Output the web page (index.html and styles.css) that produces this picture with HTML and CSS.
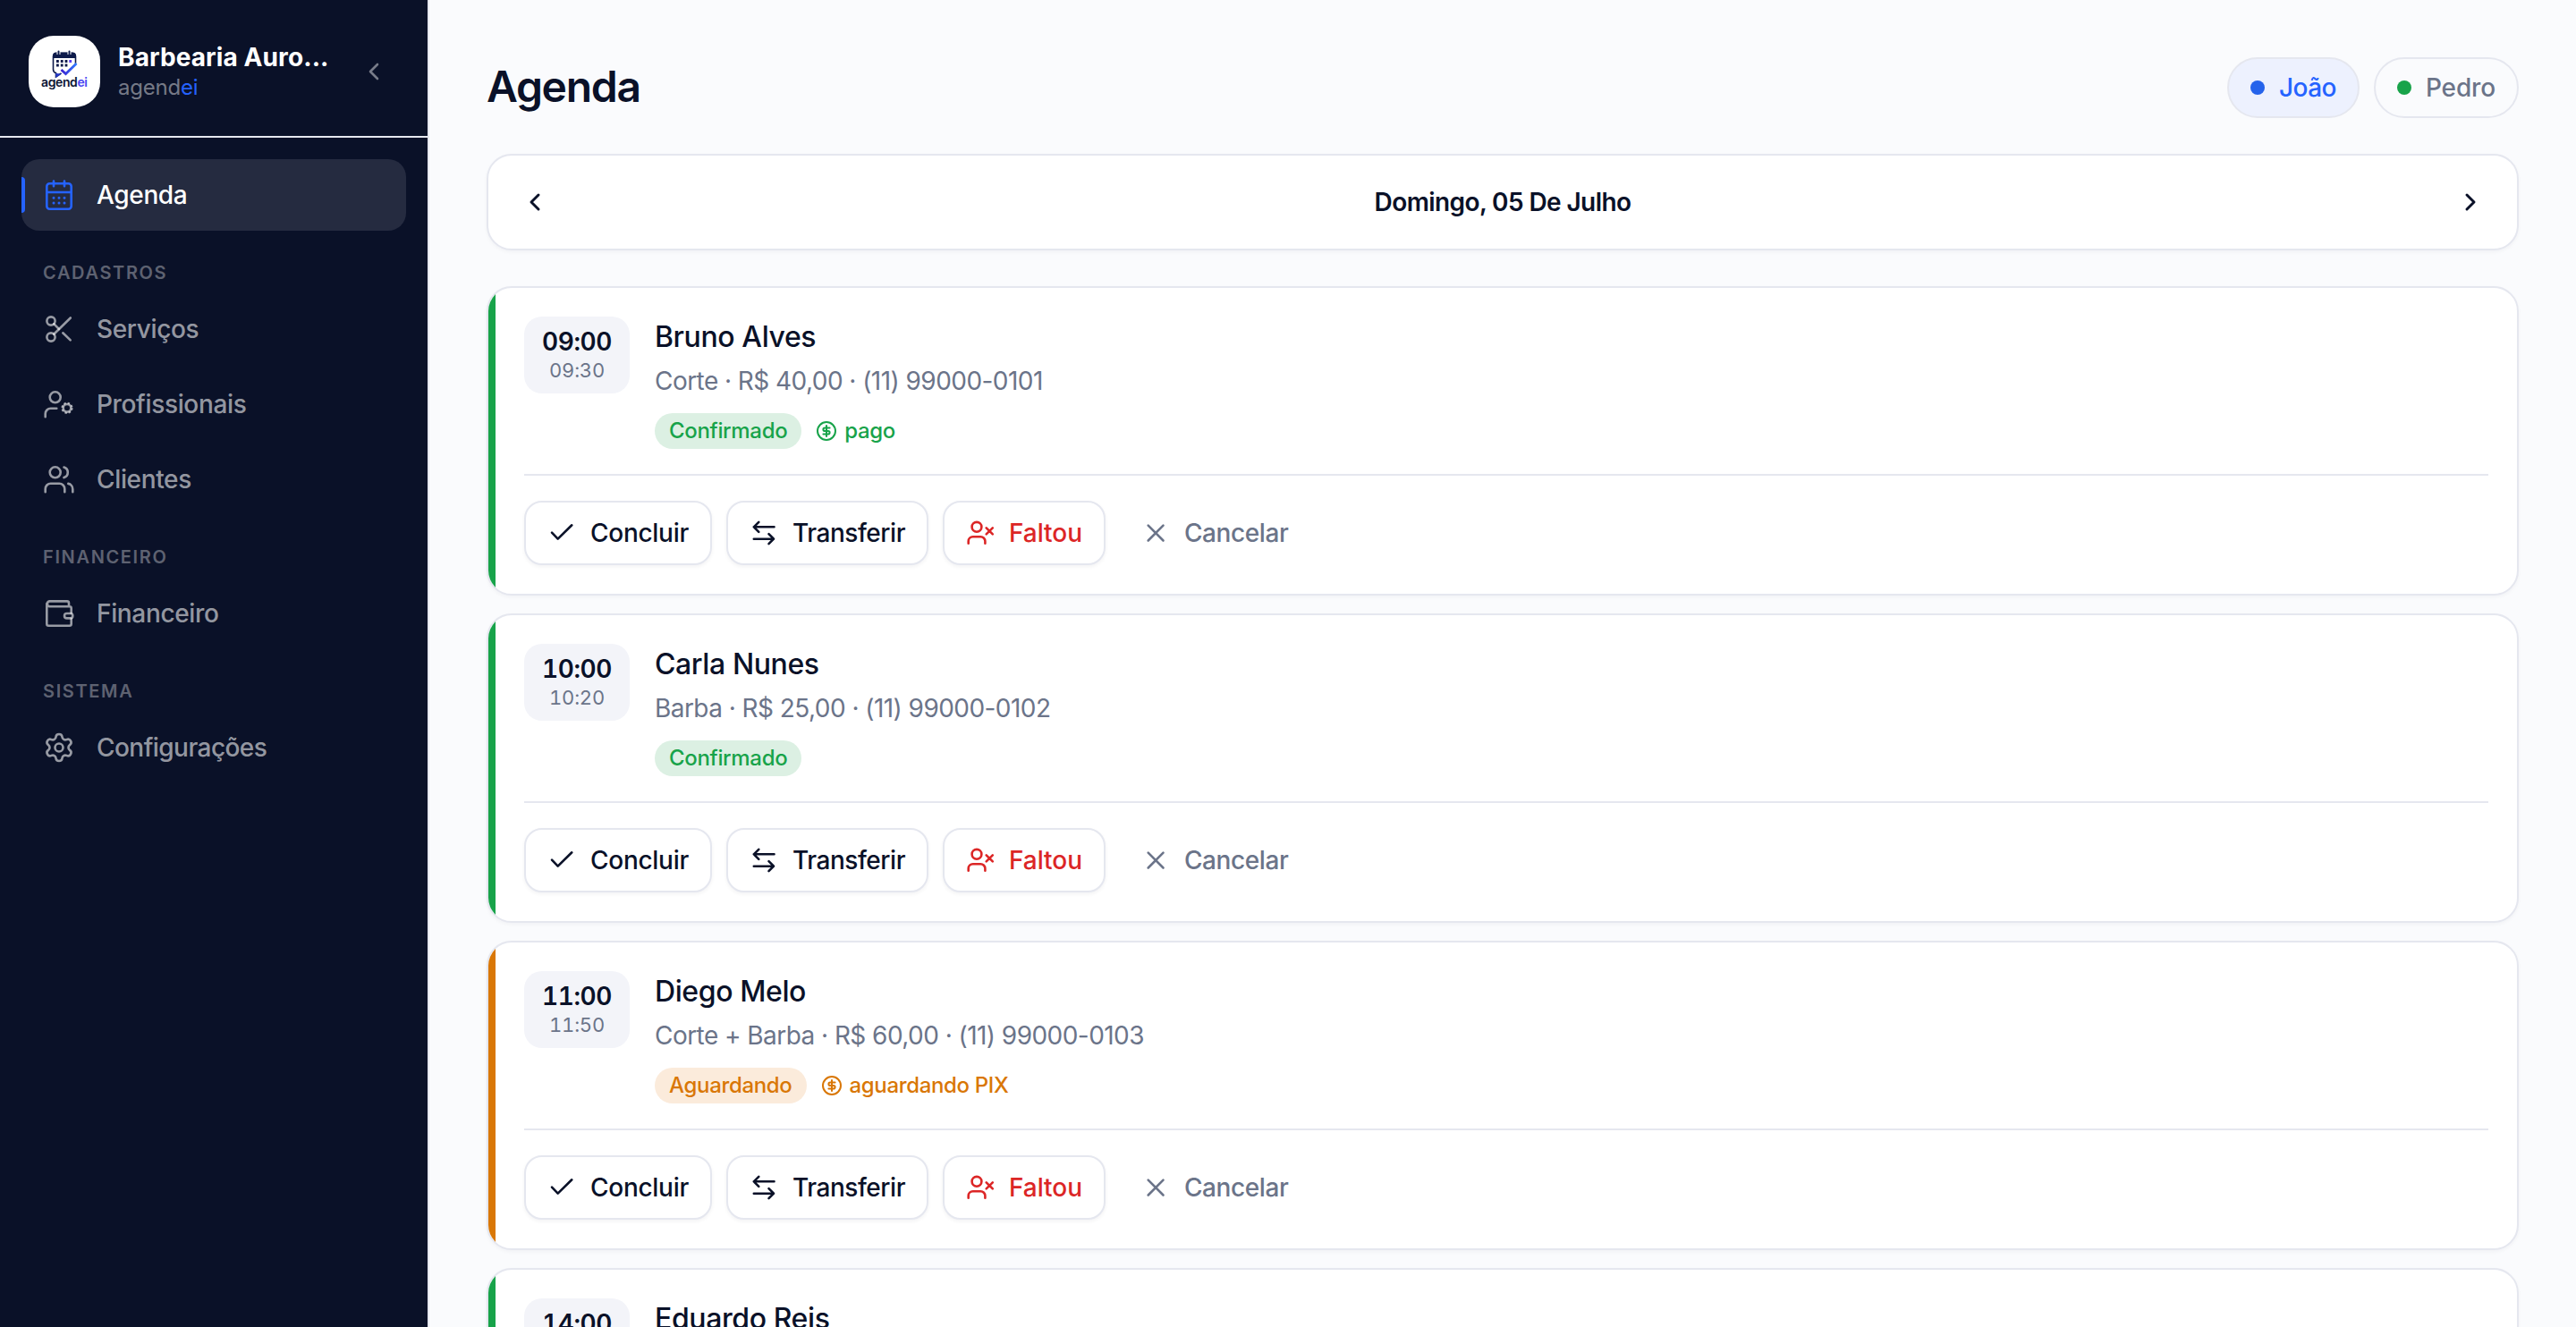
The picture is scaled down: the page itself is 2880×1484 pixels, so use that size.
FILE: index.html
```html
<!DOCTYPE html>
<html lang="pt-BR">
<head>
    <meta charset="UTF-8">
    <meta name="viewport" content="width=device-width, initial-scale=1.0">
    <title>Agenda</title>
    <link rel="stylesheet" href="styles.css">
</head>
<body>
    <!-- Shared icons -->
    <svg class="sprite">
        <symbol id="i-check" viewBox="0 0 32 32"><path d="M5 15.7l6.7 6.9L27.3 7.3"/></symbol>
        <symbol id="i-transfer" viewBox="0 0 32 32"><path d="M10.3 3.8L4.8 9.3l5.5 5.5M4.8 9.3H27.5M21.5 17.2l5.5 5.5-5.5 5.5M27 22.7H4.8"/></symbol>
        <symbol id="i-user-x" viewBox="0 0 32 32"><circle cx="12" cy="9.3" r="5.4"/><path d="M2.7 27.7v-2.4a5 5 0 0 1 5-5h8.7a5 5 0 0 1 5 5v2.4M22.7 10.3l7.1 7.1M29.8 10.3l-7.1 7.1"/></symbol>
        <symbol id="i-x" viewBox="0 0 32 32"><path d="M7.7 7.7l16.8 16.8M24.5 7.7L7.7 24.5"/></symbol>
        <symbol id="i-coin" viewBox="0 0 24 24"><circle cx="12" cy="12" r="10"/><path d="M15.6 8.4h-5.4a1.8 1.8 0 0 0 0 3.6h3.6a1.8 1.8 0 0 1 0 3.6H8.4M12 6v12"/></symbol>
        <symbol id="i-left" viewBox="0 0 32 32"><path d="M20 8l-8 8 8 8"/></symbol>
        <symbol id="i-right" viewBox="0 0 32 32"><path d="M12 8l8 8-8 8"/></symbol>
    </svg>

    <div class="app">
        <aside class="sidebar">
            <div class="brand">
                <svg class="brand-logo" viewBox="0 0 80 80">
                    <path d="M31 19.5h18a3.5 3.5 0 0 1 3.5 3.5v8M31 19.5a3.5 3.5 0 0 0-3.5 3.5v14.5a4 4 0 0 0 3 4v4.5l6-4.2" fill="none" stroke="#0d1a4a" stroke-width="1.6"/>
                    <path d="M27 25v-2.5a4 4 0 0 1 4-4h18a4 4 0 0 1 4 4V25z" fill="#0d1a4a"/>
                    <path d="M33.5 17v4M45.5 17v4" stroke="#fff" stroke-width="4"/>
                    <path d="M33.5 17.5v3.500M45.5 17.5v3.500" stroke="#0d1a4a" stroke-width="2" stroke-linecap="round"/>
                    <path d="M31 28.5h12.500M31 33h12.500" stroke="#0d1a4a" stroke-width="2.8" stroke-dasharray="2.8 2"/>
                    <path d="M45.3 28.5h2.8" stroke="#5b3df5" stroke-width="2.8"/>
                    <path d="M30 42l7 .5-6.5 4.5z" fill="#2438c4"/>
                    <path d="M36.5 38l5 4.5L53.5 31" fill="none" stroke="url(#tick)" stroke-width="2.8"/>
                    <linearGradient id="tick"><stop offset="0" stop-color="#3b1fd0"/><stop offset="1" stop-color="#2f7bff"/></linearGradient>
                    <text class="logo-text" x="14" y="57" textLength="52">agend<tspan fill="#4a49f2">ei</tspan></text>
                </svg>
                <div class="brand-info">
                    <div class="brand-name">Barbearia Auro...</div>
                    <div class="brand-sub">agend<span>ei</span></div>
                </div>
                <svg class="icon collapse"><use href="#i-left"/></svg>
            </div>

            <nav class="nav">
                <a class="nav-item active">
                    <svg class="nav-icon" viewBox="0 0 36 36"><rect x="4.3" y="5.3" width="27.4" height="28.4" rx="3.2"/><path d="M4.3 15h27.4M12 2.5v5.8M24 2.5v5.8"/><path class="dots" d="M12 21.3h.01M18 21.3h.01M24 21.3h.01M12 27h.01M18 27h.01M24 27h.01"/></svg>
                    Agenda
                </a>

                <div class="nav-label">CADASTROS</div>
                <a class="nav-item">
                    <svg class="nav-icon" viewBox="0 0 36 36"><circle cx="9" cy="9" r="4.6"/><circle cx="9" cy="27" r="4.6"/><path d="M12.2 12.2L18 18"/><path d="M30.8 5.5L12.2 23.8"/><path d="M22.3 22.3l8.4 8.1"/></svg>
                    Serviços
                </a>
                <a class="nav-item">
                    <svg class="nav-icon" viewBox="0 0 36 36"><circle cx="13.7" cy="10.3" r="6"/><path d="M2.7 32.3v-3.6a6 6 0 0 1 6-6h6.6"/><circle cx="27" cy="22.3" r="4.3"/><circle class="teeth" cx="27" cy="22.3" r="5.6"/></svg>
                    Profissionais
                </a>
                <a class="nav-item">
                    <svg class="nav-icon" viewBox="0 0 36 36"><circle cx="13.7" cy="10.3" r="6"/><path d="M2.7 32.3v-3.6a6 6 0 0 1 6-6h9.6a6 6 0 0 1 6 6v3.6M23.5 4.6a6 6 0 0 1 0 11.5M28.3 22.9a6 6 0 0 1 5 6v3.4"/></svg>
                    Clientes
                </a>

                <div class="nav-label">FINANCEIRO</div>
                <a class="nav-item">
                    <svg class="nav-icon" viewBox="0 0 36 36"><path d="M29 10.3V6.4a2 2 0 0 0-2-2H7.3a3 3 0 0 0 0 5.9h22.4a2 2 0 0 1 2 2v5.2M31.7 23.7v6a2 2 0 0 1-2 2H6.3a2 2 0 0 1-2-2V7"/><rect x="24" y="18" width="9.3" height="5.4" rx="2.7"/></svg>
                    Financeiro
                </a>

                <div class="nav-label">SISTEMA</div>
                <a class="nav-item last">
                    <svg class="nav-icon gear" viewBox="0 0 24 24"><path d="M9.671 4.136a2.34 2.34 0 0 1 4.659 0 2.34 2.34 0 0 0 3.319 1.915 2.34 2.34 0 0 1 2.33 4.033 2.34 2.34 0 0 0 0 3.831 2.34 2.34 0 0 1-2.33 4.033 2.34 2.34 0 0 0-3.319 1.915 2.34 2.34 0 0 1-4.659 0 2.34 2.34 0 0 0-3.32-1.915 2.34 2.34 0 0 1-2.33-4.033 2.34 2.34 0 0 0 0-3.831A2.34 2.34 0 0 1 6.35 6.051a2.34 2.34 0 0 0 3.319-1.915"/><circle cx="12" cy="12" r="3"/></svg>
                    Configurações
                </a>
            </nav>
        </aside>

        <main class="main">
            <header class="page-header">
                <h1>Agenda</h1>
                <div class="pills">
                    <button class="pill selected"><span class="dot blue"></span>João</button>
                    <button class="pill"><span class="dot green"></span>Pedro</button>
                </div>
            </header>

            <div class="date-bar">
                <svg class="icon"><use href="#i-left"/></svg>
                <span class="date">Domingo, 05 De Julho</span>
                <svg class="icon"><use href="#i-right"/></svg>
            </div>

            <div class="list" id="list"></div>
        </main>
    </div>

    <script>
        const appointments = [
            { start: '09:00', end: '09:30', name: 'Bruno Alves', details: 'Corte · R$ 40,00 · (11) 99000-0101', status: 'Confirmado', type: 'confirmed', payment: 'pago' },
            { start: '10:00', end: '10:20', name: 'Carla Nunes', details: 'Barba · R$ 25,00 · (11) 99000-0102', status: 'Confirmado', type: 'confirmed' },
            { start: '11:00', end: '11:50', name: 'Diego Melo', details: 'Corte + Barba · R$ 60,00 · (11) 99000-0103', status: 'Aguardando', type: 'waiting', payment: 'aguardando PIX' },
            { start: '14:00', end: '14:30', name: 'Eduardo Reis', details: 'Corte · R$ 40,00 · (11) 99000-0104', status: 'Confirmado', type: 'confirmed' }
        ];

        const icon = (name, cls = 'icon') => `<svg class="${cls}"><use href="#i-${name}"/></svg>`;

        document.getElementById('list').innerHTML = appointments.map(a => `
            <article class="card ${a.type}">
                <div class="card-top">
                    <div class="time">
                        <div class="time-start">${a.start}</div>
                        <div class="time-end">${a.end}</div>
                    </div>
                    <div class="info">
                        <div class="name">${a.name}</div>
                        <div class="details">${a.details}</div>
                        <div class="tags">
                            <span class="badge">${a.status}</span>
                            ${a.payment ? `<span class="payment">${icon('coin', 'coin')}${a.payment}</span>` : ''}
                        </div>
                    </div>
                </div>
                <div class="actions">
                    <button class="btn btn-done">${icon('check')}Concluir</button>
                    <button class="btn btn-transfer">${icon('transfer')}Transferir</button>
                    <button class="btn btn-missed">${icon('user-x')}Faltou</button>
                    <button class="btn btn-cancel">${icon('x')}Cancelar</button>
                </div>
            </article>
        `).join('');
    </script>
</body>
</html>
```

FILE: styles.css
```css
* {
    box-sizing: border-box;
}
body {
    margin: 0;
    font-family: Inter, "Liberation Sans", sans-serif;
    font-size: 28px;
    color: #0a1128;
    background: #fafbfd;
}
button {
    font: inherit;
    cursor: pointer;
}
svg {
    display: block;
    flex-shrink: 0;
}
.sprite {
    display: none;
}
.icon {
    width: 32px;
    height: 32px;
}
.icon, .coin, .nav-icon {
    fill: none;
    stroke: currentColor;
    stroke-width: 2.6;
    stroke-linecap: round;
    stroke-linejoin: round;
}
.app {
    display: flex;
    height: 100vh;
    overflow: hidden;
}

/* Sidebar */
.sidebar {
    width: 480px;
    flex-shrink: 0;
    background: #0a1128;
    border-right: 2px solid #e5e7ef;
}
.brand {
    display: flex;
    align-items: center;
    height: 154px;
    padding: 8px 44px 0 32px;
    border-bottom: 2px solid #e5e7ef;
}
.brand-logo {
    width: 80px;
    height: 80px;
    border-radius: 28px;
    background: #fff;
}
.logo-text {
    font-size: 14px;
    font-weight: 600;
    fill: #0d1533;
}
.brand-info {
    flex: 1;
    margin-left: 20px;
}
.brand-name {
    font-weight: 700;
    line-height: 36px;
    letter-spacing: 0.1px;
    color: #fff;
    white-space: nowrap;
}
.brand-sub {
    font-size: 24px;
    line-height: 32px;
    letter-spacing: -0.2px;
    color: rgba(255, 255, 255, 0.45);
}
.brand-sub span {
    color: #2563ff;
}
.collapse {
    color: rgba(255, 255, 255, 0.45);
}
.nav {
    display: flex;
    flex-direction: column;
    padding: 24px 24px 0;
}
.nav-item {
    display: flex;
    align-items: center;
    gap: 24px;
    height: 80px;
    padding: 0 24px;
    border-radius: 20px;
    font-weight: 500;
    letter-spacing: -0.35px;
    color: rgba(255, 255, 255, 0.58);
}
.nav-item + .nav-item {
    margin-top: 4px;
}
.nav-item.last {
    letter-spacing: -0.55px;
}
.nav-item.active {
    position: relative;
    color: #fff;
    background: #252b40;
}
.nav-item.active::before {
    content: "";
    position: absolute;
    left: 0;
    top: 20px;
    width: 4px;
    height: 40px;
    border-radius: 0 4px 4px 0;
    background: #2563ff;
}
.nav-icon {
    width: 36px;
    height: 36px;
}
.nav-icon .dots {
    stroke-width: 3;
}
.nav-icon .teeth {
    stroke-width: 2;
    stroke-linecap: butt;
    stroke-dasharray: 2.4 2;
}
.nav-icon.gear {
    stroke-width: 1.75;
}
.active .nav-icon {
    color: #2563ff;
}
.nav-label {
    margin: 32px 24px 8px;
    font-size: 20px;
    font-weight: 600;
    line-height: 30px;
    letter-spacing: 1.65px;
    color: rgba(255, 255, 255, 0.35);
}

/* Main */
.main {
    flex: 1;
    padding: 64px 64px 0;
}
.page-header {
    display: flex;
    justify-content: space-between;
    height: 68px;
    margin-bottom: 40px;
}
h1 {
    margin: 0;
    font-size: 48px;
    font-weight: 600;
    line-height: 66px;
    letter-spacing: -1.3px;
}
.pills {
    display: flex;
    gap: 16px;
}
.pill {
    display: flex;
    align-items: center;
    gap: 16px;
    padding: 0 24px;
    border: 2px solid #e5e7ef;
    border-radius: 34px;
    background: transparent;
    font-weight: 500;
    letter-spacing: -0.15px;
    color: #6b7489;
}
.pill.selected {
    background: #edf1fe;
    letter-spacing: -0.5px;
    color: #2563ff;
}
.dot {
    width: 16px;
    height: 16px;
    border-radius: 50%;
}
.dot.blue {
    background: #2563eb;
}
.dot.green {
    background: #18a34a;
}
.date-bar {
    display: flex;
    align-items: center;
    justify-content: space-between;
    height: 108px;
    margin-bottom: 40px;
    padding: 0 36px;
    border: 2px solid #e5e7ef;
    border-radius: 28px;
    background: #fff;
    box-shadow: 0 2px 4px rgba(10, 17, 40, 0.04);
}
.date-bar .icon {
    stroke-width: 3;
}
.date {
    font-weight: 600;
    letter-spacing: -0.6px;
}

/* Appointments */
.list {
    display: flex;
    flex-direction: column;
    gap: 20px;
}
.card {
    position: relative;
    height: 346px;
    padding: 32px 32px 32px 40px;
    border: 2px solid #e5e7ef;
    border-radius: 28px;
    background: #fff;
    box-shadow: 0 2px 4px rgba(10, 17, 40, 0.04);
    overflow: hidden;
    flex-shrink: 0;
}
.card::before {
    content: "";
    position: absolute;
    left: 0;
    top: 0;
    bottom: 0;
    width: 8px;
    background: #18a34a;
}
.card.waiting::before {
    background: #d97706;
}
.card-top {
    display: flex;
    gap: 28px;
}
.time {
    width: 118px;
    height: 86px;
    padding-top: 10px;
    border-radius: 20px;
    background: #f3f4f9;
    text-align: center;
    font-variant-numeric: tabular-nums;
}
.time-start {
    font-weight: 600;
    line-height: 36px;
    letter-spacing: -0.4px;
}
.time-end {
    font-size: 22px;
    line-height: 28px;
    letter-spacing: -0.2px;
    color: #6b7489;
}
.name {
    padding-top: 1px;
    font-size: 32px;
    font-weight: 500;
    line-height: 44px;
    letter-spacing: -0.4px;
}
.details {
    margin-top: 7px;
    line-height: 40px;
    letter-spacing: -0.55px;
    color: #6b7489;
}
.tags {
    display: flex;
    align-items: center;
    gap: 16px;
    margin-top: 16px;
    font-size: 24px;
    font-weight: 500;
    color: #18a34a;
}
.waiting .tags {
    color: #d97706;
}
.badge {
    padding: 0 16px;
    border-radius: 20px;
    line-height: 40px;
    letter-spacing: -0.33px;
    background: #dcf0e3;
}
.waiting .badge {
    background: #fbebdb;
}
.payment {
    display: flex;
    align-items: center;
    gap: 8px;
    line-height: 40px;
    letter-spacing: -0.35px;
}
.coin {
    width: 24px;
    height: 24px;
    stroke-width: 2;
}
.actions {
    display: flex;
    gap: 16px;
    margin-top: 28px;
    padding-top: 28px;
    border-top: 2px solid #e5e7ef;
}
.btn {
    display: flex;
    align-items: center;
    gap: 16px;
    height: 72px;
    padding: 0 24px;
    border: 2px solid #e5e7ef;
    border-radius: 20px;
    background: #fff;
    font-weight: 500;
    color: #0a1128;
    box-shadow: 0 2px 4px rgba(10, 17, 40, 0.05);
}
.btn-done {
    letter-spacing: -0.28px;
}
.btn-transfer {
    letter-spacing: -0.46px;
}
.btn-missed {
    letter-spacing: -0.05px;
    color: #dc2626;
}
.btn-cancel {
    border: 0;
    background: none;
    box-shadow: none;
    letter-spacing: -0.4px;
    color: #6b7489;
}
```
